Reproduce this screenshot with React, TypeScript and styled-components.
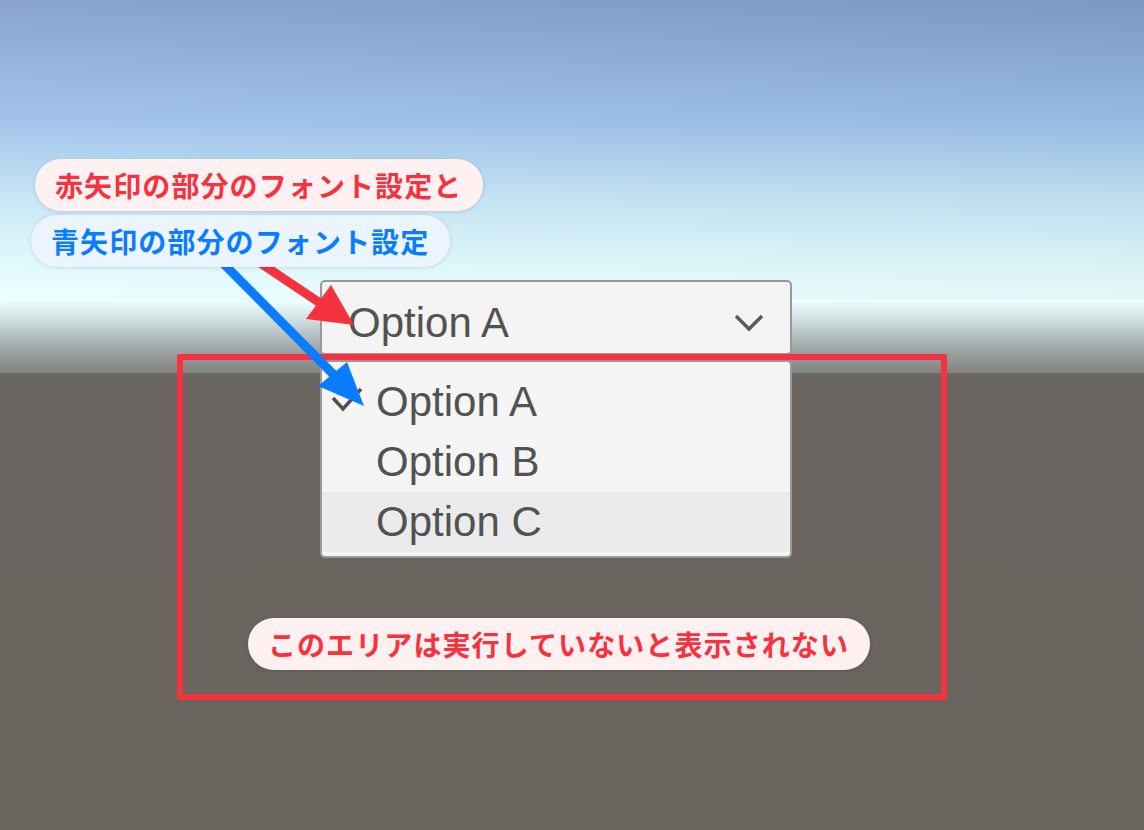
import styled, { createGlobalStyle } from "styled-components";

const GlobalStyle = createGlobalStyle`
  html, body {
    margin: 0;
    padding: 0;
  }
  body {
    font-family: "Liberation Sans", Arial, sans-serif;
  }
`;

const RED = "#f7323f";
const BLUE = "#0a7cff";

const Scene = styled.div`
  position: relative;
  width: 1144px;
  height: 830px;
  overflow: hidden;
  box-sizing: border-box;
  padding: 280px 0 0 320px;
  background:
    linear-gradient(100deg, rgba(255, 255, 255, 0.08), rgba(0, 0, 0, 0.03)) top / 100% 300px no-repeat,
    linear-gradient(
      180deg,
      #7e9dc8 0px,
      #9bbfe8 120px,
      #c4e5f6 200px,
      #e2fbfd 270px,
      #ecffff 300px,
      #d2e2e2 318px,
      #b0bcbc 338px,
      #959a9a 356px,
      #848585 372px,
      #6b6561 374px,
      #6a645f 100%
    );
`;

const Dropdown = styled.div`
  width: 472px;
  display: flex;
  flex-direction: column;
  gap: 5px;
  font-family: "Liberation Sans", Arial, sans-serif;
  font-size: 42px;
  color: #525252;
`;

const Field = styled.div`
  height: 75px;
  box-sizing: border-box;
  border: 2px solid #999999;
  border-radius: 5px;
  background: #f4f4f4;
  display: flex;
  align-items: center;
  justify-content: space-between;
  padding: 10px 25px 0 26px;
`;

const Chevron = styled.svg`
  width: 32px;
  height: 20px;
`;

const List = styled.div`
  box-sizing: border-box;
  border: 2px solid #999999;
  border-radius: 5px;
  background: #f5f5f5;
  padding: 10px 0 4px;
  display: flex;
  flex-direction: column;
`;

const Row = styled.div<{ $active?: boolean }>`
  height: 60px;
  line-height: 60px;
  display: flex;
  align-items: center;
  padding-left: 9px;
  background: ${(p) => (p.$active ? "#ebebeb" : "transparent")};
`;

const CheckSlot = styled.div`
  width: 45px;
  height: 60px;
  display: flex;
  align-items: center;
`;

const Frame = styled.div`
  position: absolute;
  left: 177px;
  top: 354px;
  width: 770px;
  height: 346px;
  box-sizing: border-box;
  border: 6px solid ${RED};
  border-radius: 2px;
  display: flex;
  align-items: flex-end;
  justify-content: center;
  padding: 0 6px 24px 0;
`;

const Pill = styled.div<{ $tone: "red" | "blue"; $shift?: number }>`
  height: 52px;
  box-sizing: border-box;
  display: inline-flex;
  align-items: center;
  padding: 0 21px 0 20px;
  margin-left: ${(p) => p.$shift ?? 0}px;
  border-radius: 26px;
  background: ${(p) => (p.$tone === "red" ? "#fff0f1" : "#ebf4ff")};
  color: ${(p) => (p.$tone === "red" ? RED : BLUE)};
  font-family: "Noto Sans CJK JP", "Noto Sans", sans-serif;
  font-weight: 700;
  font-size: 28px;
  letter-spacing: 1.1px;
  white-space: nowrap;
  box-shadow: 0 1px 4px rgba(0, 0, 0, 0.12);
`;

const Callouts = styled.div`
  position: absolute;
  left: 31px;
  top: 159px;
  display: flex;
  flex-direction: column;
  align-items: flex-start;
  gap: 4px;
  z-index: 3;
`;

const Arrows = styled.svg`
  position: absolute;
  left: 0;
  top: 0;
  width: 1144px;
  height: 830px;
  pointer-events: none;
  z-index: 2;
`;

export default function App() {
  return (
    <>
      <GlobalStyle />
      <Scene>
        <Dropdown>
          <Field>
            <span>Option A</span>
            <Chevron viewBox="0 0 32 20">
              <polyline
                points="3,3 16,16 29,3"
                fill="none"
                stroke="#5a5a5a"
                strokeWidth="3.5"
              />
            </Chevron>
          </Field>
          <List>
            <Row>
              <CheckSlot>
                <svg width="32" height="30" viewBox="0 0 32 30">
                  <polyline
                    points="2,11 12,22 30,2"
                    fill="none"
                    stroke="#4e4e4e"
                    strokeWidth="3.5"
                  />
                </svg>
              </CheckSlot>
              Option A
            </Row>
            <Row>
              <CheckSlot />
              Option B
            </Row>
            <Row $active>
              <CheckSlot />
              Option C
            </Row>
          </List>
        </Dropdown>

        <Frame>
          <Pill $tone="red">このエリアは実行していないと表示されない</Pill>
        </Frame>

        <Arrows viewBox="0 0 1144 830">
          <line x1="226" y1="240" x2="320" y2="303" stroke={RED} strokeWidth="9" />
          <polygon points="306,319 331,285 354,325" fill={RED} />
          <line x1="200" y1="240" x2="334" y2="375" stroke={BLUE} strokeWidth="9" />
          <polygon points="318,386 347,362 364,406" fill={BLUE} />
        </Arrows>

        <Callouts>
          <Pill $tone="red" $shift={4}>
            赤矢印の部分のフォント設定と
          </Pill>
          <Pill $tone="blue">青矢印の部分のフォント設定</Pill>
        </Callouts>
      </Scene>
    </>
  );
}
